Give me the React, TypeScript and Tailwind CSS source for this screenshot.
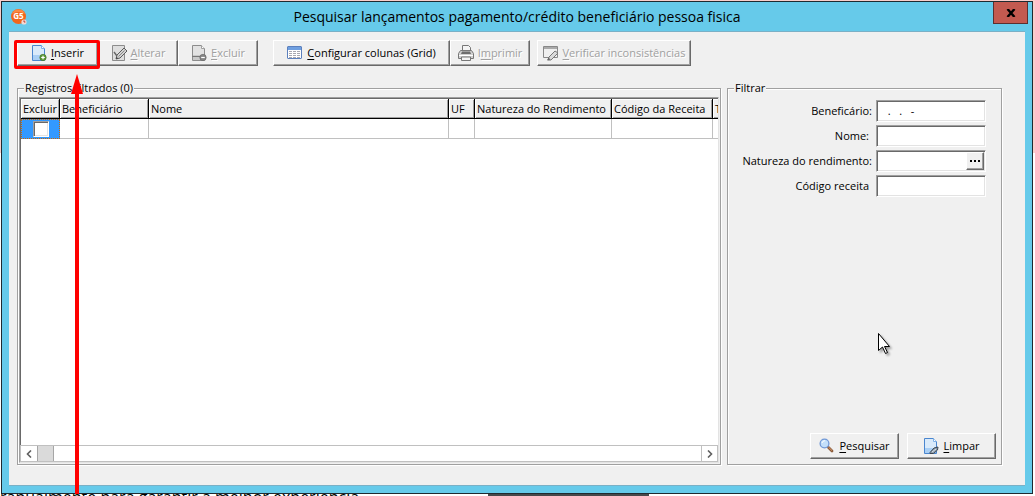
import type { ReactNode } from "react";

const raised =
    "border border-t-white border-l-white border-r-[#696969] border-b-[#696969] shadow-[inset_-1px_-1px_0_#a0a0a0]";
const sunken =
    "border border-t-[#a0a0a0] border-l-[#a0a0a0] border-r-white border-b-white shadow-[inset_1px_1px_0_#696969,inset_-1px_-1px_0_#e3e3e3]";
const group =
    "min-w-0 border border-[#a0a0a0] shadow-[1px_1px_0_#fff,inset_1px_1px_0_#fff]";

const AppLogo = () => (
    <svg className="h-4 w-4" viewBox="0 0 16 16" aria-hidden="true">
        <circle cx="7.5" cy="7.5" r="7.5" fill="#f2661c" />
        <path d="M1 5a7 7 0 0 1 13 0Q7 1 1 5Z" fill="#f98a45" />
        <text x="7.4" y="10.4" textAnchor="middle" fontFamily="Open Sans" fontSize="8" fontWeight="700" fill="#fff">
            G5
        </text>
        <circle cx="13" cy="13" r="2.6" fill="#f3d9d4" />
        <path d="M13 11.4V13h1.4" stroke="#c0392b" strokeWidth="1" fill="none" />
    </svg>
);

type SheetProps = { gray?: boolean; children?: ReactNode };

const Sheet = ({ gray, children }: SheetProps) => (
    <svg className="h-4 w-4 shrink-0" viewBox="0 0 16 16" fill="none" aria-hidden="true">
        <path
            d="M1.5.5h9l3 3v12h-12z"
            fill={gray ? "#e2e2e2" : "#d9eafa"}
            stroke={gray ? "#8c8c8c" : "#4a86cf"}
        />
        <path d="M2 10h11v5H2z" fill={gray ? "#c9c9c9" : "#a9cff5"} />
        <path d="M10.5.5v3h3" fill="#fff" stroke={gray ? "#a0a0a0" : "#7fb0e6"} />
        {children}
    </svg>
);

const InsertIcon = () => (
    <Sheet>
        <circle cx="12" cy="12.5" r="3.2" fill="#5f9a3c" stroke="#3d6f22" strokeWidth=".6" />
        <path d="M12 10.7v3.6M10.2 12.5h3.6" stroke="#fff" strokeWidth="1.2" />
    </Sheet>
);

const DeleteIcon = () => (
    <Sheet gray>
        <path d="M1 11.5h8" stroke="#777" />
        <circle cx="12" cy="12.5" r="3.2" fill="#858585" stroke="#666" strokeWidth=".6" />
        <path d="M10.2 12.5h3.6" stroke="#fff" strokeWidth="1.2" />
    </Sheet>
);

const EditIcon = () => (
    <svg className="h-4 w-4 shrink-0" viewBox="0 0 16 16" fill="none" aria-hidden="true">
        <path d="M1.5.5h12v15h-12z" fill="#dedede" stroke="#8c8c8c" />
        <path d="M3 7l3 4" stroke="#666" strokeWidth="1.4" />
        <path d="M5 14l1-4 7-7 3 3-7 7z" fill="#d2d2d2" stroke="#5c5c5c" />
        <path d="M5 14l.6-2.2 1.6 1.6z" fill="#444" />
        <path d="M7.5 11.5l6-6" stroke="#888" />
    </svg>
);

const GridIcon = () => (
    <svg className="h-4 w-4 shrink-0" viewBox="0 0 16 16" fill="none" aria-hidden="true">
        <rect x=".5" y="1.5" width="14" height="12" rx=".5" fill="#fff" stroke="#5c80bd" />
        <path d="M1 2h13v3H1z" fill="#6f9fe0" />
        <path
            d="M2 6.5h3M6 6.5h3M10 6.5h3M2 8.5h3M6 8.5h3M10 8.5h3M2 10.5h3M6 10.5h3M10 10.5h3M2 12.5h3M6 12.5h3M10 12.5h3"
            stroke="#a8a8b0"
        />
    </svg>
);

const PrintIcon = () => (
    <svg className="h-4 w-4 shrink-0" viewBox="0 0 16 16" fill="none" aria-hidden="true">
        <path d="M4.500 7V.5h6l2 2V7" fill="#f4f4f4" stroke="#777" />
        <path d="M2.500 5.500h11l2 3v5h-15v-5z" fill="#d0d0d0" stroke="#777" />
        <path d="M4 6.500h8l1 2.500H3z" fill="#6c6c6c" />
        <path d="M1 10.500h14" stroke="#fff" />
        <path d="M3.500 12h9v3.500h-9z" fill="#f2f2f2" stroke="#777" />
    </svg>
);

const VerifyIcon = () => (
    <svg className="h-4 w-4 shrink-0" viewBox="0 0 16 16" fill="none" aria-hidden="true">
        <path d="M.5 1.500h14v11H.5z" fill="#efefef" stroke="#888" />
        <path d="M1 2h13v2H1z" fill="#aaa" />
        <path d="M5 15l1-3 6-6 3 2-7 7z" fill="#dadada" stroke="#777" />
        <path d="M4 15.500l1.500-3 2 2z" fill="#666" />
    </svg>
);

const SearchIcon = () => (
    <svg className="h-4 w-4 shrink-0" viewBox="0 0 16 16" fill="none" aria-hidden="true">
        <path d="M9.500 9.500l3.500 3.500" stroke="#8b5b3b" strokeWidth="2.800" strokeLinecap="round" />
        <path d="M9.500 9.200l3.500 3.400" stroke="#d79a6c" strokeWidth="1" />
        <circle cx="5.500" cy="5.500" r="4.400" fill="#c3dffa" stroke="#7198d6" strokeWidth="1.300" />
        <path d="M3 5a3 3 0 0 1 3-2.300" stroke="#fff" />
    </svg>
);

const ClearIcon = () => (
    <Sheet>
        <path d="M7 14.500l4-4.500 4-1-.5 3-4 3.500H7z" fill="#8c9aa8" stroke="#3d4854" />
        <path d="M9 14l4-3" stroke="#dde4ea" />
    </Sheet>
);

type ToolButtonProps = {
    icon: ReactNode;
    label: string;
    hotkey?: number;
    disabled?: boolean;
    className?: string;
};

const ToolButton = ({ icon, label, hotkey = 0, disabled, className = "" }: ToolButtonProps) => (
    <button
        type="button"
        disabled={disabled}
        className={`flex h-[26px] items-center justify-center gap-1 whitespace-nowrap bg-[#f0f0f0] ${raised} ${disabled ? "text-[#a0a0a0] [text-shadow:1px_1px_0_#fff]" : "text-black"} ${className}`}
    >
        {icon}
        <span>
            {label.slice(0, hotkey)}
            <span className="underline underline-offset-2">{label[hotkey]}</span>
            {label.slice(hotkey + 1)}
        </span>
    </button>
);

const columns = [
    { title: "Excluir", width: "w-[39px]" },
    { title: "Beneficiário", width: "w-[89px]" },
    { title: "Nome", width: "w-[300px]" },
    { title: "UF", width: "w-[26px]" },
    { title: "Natureza do Rendimento", width: "w-[137px]" },
    { title: "Código da Receita", width: "w-[101px]" },
    { title: "T", width: "w-[60px]" },
];

const RecordsGrid = () => (
    <div className="flex flex-1 flex-col overflow-hidden border border-t-[#a0a0a0] border-r-[#e3e3e3] border-b-[#e3e3e3] border-l-[#a0a0a0] bg-white">
        <div className="flex-1 overflow-hidden border-t border-l border-[#696969]">
            <table className="w-[752px] table-fixed border-separate border-spacing-0">
                <thead>
                    <tr className="h-5">
                        {columns.map((column) => (
                            <th
                                key={column.title}
                                className={`${column.width} overflow-hidden border-r border-b border-black bg-[#f0f0f0] p-0 pl-[2px] text-left font-normal whitespace-nowrap shadow-[inset_1px_1px_0_#fff,inset_-1px_-1px_0_#a0a0a0]`}
                            >
                                {column.title}
                            </th>
                        ))}
                    </tr>
                </thead>
                <tbody>
                    <tr className="h-5">
                        <td className="border border-dotted border-[#cc6600] bg-[#3399ff] p-0">
                            <input
                                type="checkbox"
                                aria-label="Excluir registro"
                                className={`mx-auto block h-4 w-4 appearance-none bg-white ${sunken}`}
                            />
                        </td>
                        {columns.slice(1).map((column) => (
                            <td key={column.title} className="border-r border-b border-[#c0c0c0] p-0" />
                        ))}
                    </tr>
                </tbody>
            </table>
        </div>
        <div className="flex h-[17px] border border-[#c0c0c0]">
            <button type="button" aria-label="Rolar para a esquerda" className="flex w-4 items-center justify-center">
                <svg className="h-2 w-[6px]" viewBox="0 0 6 8" aria-hidden="true">
                    <path d="M5 .5L1.500 4 5 7.500" fill="none" stroke="#606060" strokeWidth="1.600" />
                </svg>
            </button>
            <div className="w-[17px] border border-y-0 border-[#a6a6a6] bg-[#dadada]" />
            <div className="flex-1" />
            <button
                type="button"
                aria-label="Rolar para a direita"
                className="flex w-4 items-center justify-center border-l border-[#c0c0c0]"
            >
                <svg className="h-2 w-[6px]" viewBox="0 0 6 8" aria-hidden="true">
                    <path d="M1 .5L4.500 4 1 7.500" fill="none" stroke="#606060" strokeWidth="1.600" />
                </svg>
            </button>
        </div>
    </div>
);

const fields = [
    { id: "beneficiario", label: "Beneficário:", value: "  .   .   -", inset: "", lookup: false },
    { id: "nome", label: "Nome:", value: "", inset: "pr-[3px]", lookup: false },
    { id: "natureza", label: "Natureza do rendimento:", value: "", inset: "", lookup: true },
    { id: "receita", label: "Código receita", value: "", inset: "pr-[3px]", lookup: false },
];

const FilterPanel = () => (
    <fieldset className={`flex w-[275px] shrink-0 flex-col ${group}`}>
        <legend className="ml-[6px] h-4 bg-[#f0f0f0] px-px leading-4">Filtrar</legend>
        <div className="flex flex-col gap-[3px] pt-1 pr-[15px]">
            {fields.map((field) => (
                <div key={field.id} className="flex items-center justify-end gap-1">
                    <label htmlFor={field.id} className={`whitespace-nowrap ${field.inset}`}>
                        {field.label}
                    </label>
                    <div className={`flex h-[22px] w-[110px] bg-white p-px ${sunken}`}>
                        <input
                            id={field.id}
                            type="text"
                            defaultValue={field.value}
                            className="min-w-0 flex-1 bg-transparent px-1 whitespace-pre outline-none"
                        />
                        {field.lookup && (
                            <button
                                type="button"
                                aria-label="Procurar natureza"
                                className={`flex w-[18px] items-center justify-center gap-[2px] bg-[#f0f0f0] ${raised}`}
                            >
                                <span className="h-[2px] w-[2px] bg-black" />
                                <span className="h-[2px] w-[2px] bg-black" />
                                <span className="h-[2px] w-[2px] bg-black" />
                            </button>
                        )}
                    </div>
                </div>
            ))}
        </div>
        <div className="mt-auto flex justify-end gap-2 pr-[5px] pb-[5px]">
            <ToolButton icon={<SearchIcon />} label="Pesquisar" className="w-[89px]" />
            <ToolButton icon={<ClearIcon />} label="Limpar" className="w-[89px]" />
        </div>
    </fieldset>
);

const Callout = () => (
    <div className="pointer-events-none absolute top-10 bottom-[2px] left-[14px] flex w-[86px] flex-col">
        <div className="h-[29px] rounded-[2px] border-[3px] border-[#ff0000]" />
        <svg className="mt-[5px] ml-[57px] h-5 w-3 shrink-0" viewBox="0 0 12 20" aria-hidden="true">
            <path d="M6 0l6 20H0z" fill="#ff0000" />
        </svg>
        <div className="ml-[61px] w-1 flex-1 bg-[#ff0000]" />
    </div>
);

const Pointer = () => (
    <svg
        className="pointer-events-none absolute top-[333px] left-[878px] h-6 w-4 drop-shadow-[2px_2px_1px_rgba(0,0,0,0.35)]"
        viewBox="0 0 16 24"
        aria-hidden="true"
    >
        <path d="M.5.5v17l4-3.500 3 6.500 2-1-3-6h5z" fill="#fff" stroke="#000" />
    </svg>
);

const App = () => {
    return (
        <div className="relative flex h-screen min-h-[300px] flex-col overflow-hidden bg-[linear-gradient(#f8cfcc_153px,#ffffff_153px)] font-['Open_Sans',sans-serif] text-[11px] leading-4 text-black">
            <div className="mt-px mr-[2px] ml-px flex min-h-0 flex-1 flex-col border border-[#1f2a30] bg-[#66caea]">
                <header className="flex h-[29px] shrink-0 items-center">
                    <div className="w-[39px] pl-[9px]">
                        <AppLogo />
                    </div>
                    <h1 className="flex-1 text-center text-[14px] leading-5 whitespace-nowrap">
                        Pesquisar lançamentos pagamento/crédito beneficiário pessoa fisica
                    </h1>
                    <button
                        type="button"
                        aria-label="Fechar"
                        className="mr-1 flex h-[22px] w-[35px] items-center justify-center self-start border border-t-0 border-[#5c2f2f] bg-[#c35a50]"
                    >
                        <svg className="h-2 w-[10px]" viewBox="0 0 10 8" aria-hidden="true">
                            <path d="M1.500 0L8.500 8M8.500 0L1.500 8" stroke="#000" strokeWidth="2.400" />
                        </svg>
                    </button>
                </header>
                <main className="mx-[7px] mb-[7px] flex min-h-0 flex-1 flex-col border-y border-[#7ab0c6] bg-[#f0f0f0] pr-[23px] pb-5 pl-2">
                    <div className="flex shrink-0 pt-2">
                        <ToolButton icon={<InsertIcon />} label="Inserir" className="w-[81px]" />
                        <ToolButton icon={<EditIcon />} label="Alterar" disabled className="w-20" />
                        <ToolButton icon={<DeleteIcon />} label="Excluir" disabled className="w-20" />
                        <ToolButton icon={<GridIcon />} label="Configurar colunas (Grid)" className="ml-[15px] w-[177px]" />
                        <ToolButton icon={<PrintIcon />} label="Imprimir" hotkey={1} disabled className="w-20" />
                        <ToolButton icon={<VerifyIcon />} label="Verificar inconsistências" disabled className="ml-[7px] w-[154px]" />
                    </div>
                    <div className="mt-[14px] flex min-h-0 flex-1 gap-[6px]">
                        <fieldset className={`flex flex-1 flex-col p-px ${group}`}>
                            <legend className="ml-[5px] h-4 bg-[#f0f0f0] px-px leading-4">Registros filtrados (0)</legend>
                            <RecordsGrid />
                        </fieldset>
                        <FilterPanel />
                    </div>
                </main>
            </div>
            <div className="flex h-[2px] shrink-0 overflow-hidden">
                <p className="w-[488px] text-[16px] leading-[6px] whitespace-nowrap">
                    ranualmente para garantir a melhor experiência
                </p>
                <div className="w-[161px] bg-[#48484a]" />
            </div>
            <Callout />
            <Pointer />
        </div>
    );
};

export default App;
